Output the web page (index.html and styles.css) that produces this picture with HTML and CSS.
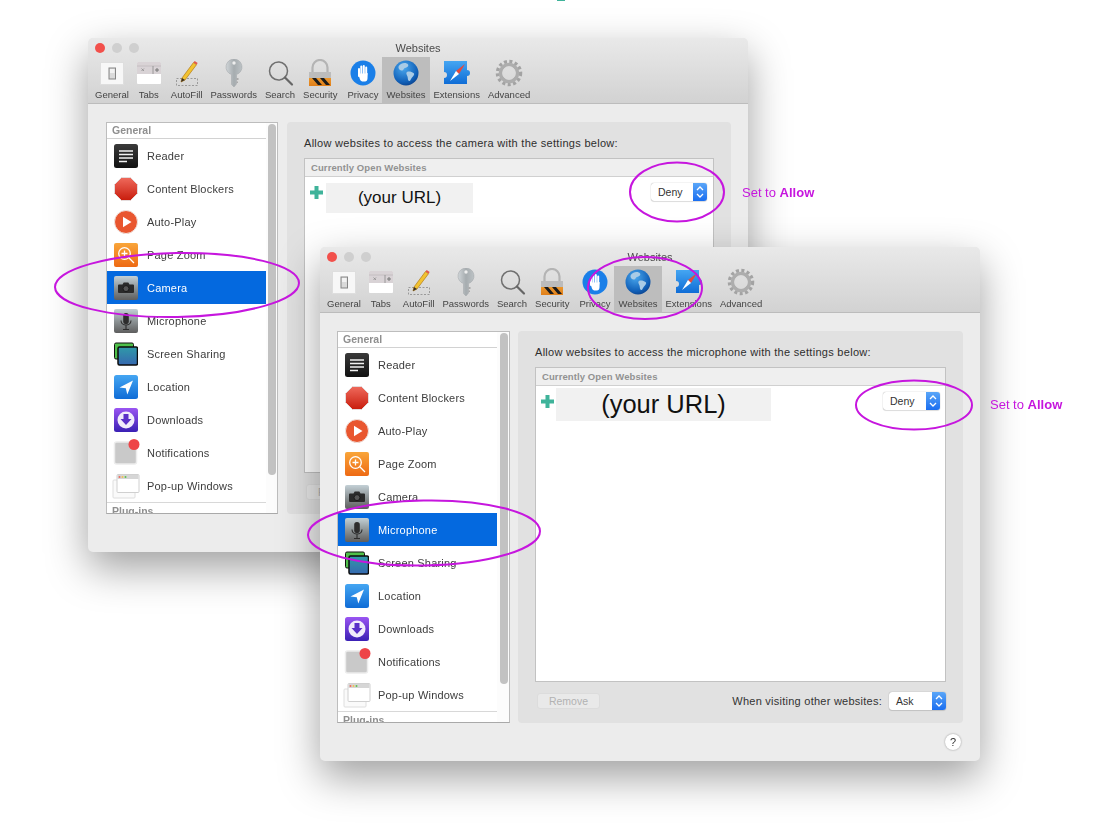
FILE: index.html
```html
<!DOCTYPE html>
<html lang="en">
<head>
    <meta charset="UTF-8">
    <meta name="viewport" content="width=device-width, initial-scale=1.0">
    <title>Websites preferences</title>
    <link rel="stylesheet" href="styles.css">
</head>
<body>

<svg class="sprites" width="0" height="0" aria-hidden="true">
    <defs>
        <linearGradient id="g-dark" x1="0" y1="0" x2="0" y2="1"><stop offset="0" stop-color="#3a3a3a"/><stop offset="1" stop-color="#111"/></linearGradient>
        <linearGradient id="g-red" x1="0" y1="0" x2="0" y2="1"><stop offset="0" stop-color="#ef6a5c"/><stop offset="1" stop-color="#c81c0c"/></linearGradient>
        <linearGradient id="g-orange" x1="0" y1="0" x2="0" y2="1"><stop offset="0" stop-color="#f9a63a"/><stop offset="1" stop-color="#ee6a14"/></linearGradient>
        <linearGradient id="g-steel" x1="0" y1="0" x2="0" y2="1"><stop offset="0" stop-color="#c3d0d6"/><stop offset=".5" stop-color="#8d9496"/><stop offset="1" stop-color="#5e5e5e"/></linearGradient>
        <linearGradient id="g-blue" x1="0" y1="0" x2="0" y2="1"><stop offset="0" stop-color="#45a6f2"/><stop offset="1" stop-color="#0f6cd6"/></linearGradient>
        <linearGradient id="g-purple" x1="0" y1="0" x2="0" y2="1"><stop offset="0" stop-color="#9a55f2"/><stop offset="1" stop-color="#3a20b4"/></linearGradient>
        <linearGradient id="g-screen" x1="0" y1="0" x2="0" y2="1"><stop offset="0" stop-color="#2f9aa8"/><stop offset="1" stop-color="#3668b0"/></linearGradient>
        <linearGradient id="g-gold" x1="0" y1="0" x2="0" y2="1"><stop offset="0" stop-color="#f5a93a"/><stop offset="1" stop-color="#e07f1a"/></linearGradient>
        <linearGradient id="g-key" x1="0" y1="0" x2="1" y2="0"><stop offset="0" stop-color="#d0d5d8"/><stop offset=".5" stop-color="#a6acaf"/><stop offset="1" stop-color="#bcc2c5"/></linearGradient>
        <radialGradient id="g-globe" cx=".4" cy=".3" r=".8"><stop offset="0" stop-color="#4aa8ee"/><stop offset=".7" stop-color="#1160b8"/><stop offset="1" stop-color="#0a3a80"/></radialGradient>

        <symbol id="i-reader" viewBox="0 0 24 24">
            <rect width="24" height="24" rx="2.5" fill="url(#g-dark)"/>
            <path d="M5 7h14M5 10.5h14M5 14h14M5 17.5h8" stroke="#f2f2f2" stroke-width="1.3"/>
        </symbol>
        <symbol id="i-blockers" viewBox="0 0 24 24">
            <path d="M7.5.5h9l7 7v9l-7 7h-9l-7-7v-9z" fill="url(#g-red)" stroke="#e4dcdc"/>
        </symbol>
        <symbol id="i-autoplay" viewBox="0 0 24 24">
            <circle cx="12" cy="12" r="11.5" fill="#e9562f" stroke="#efe4e0"/>
            <path d="M9 6.8l8.5 5.2L9 17.2z" fill="#fff"/>
        </symbol>
        <symbol id="i-zoom" viewBox="0 0 24 24">
            <rect width="24" height="24" rx="2" fill="url(#g-orange)"/>
            <circle cx="10.5" cy="10.5" r="5.8" fill="none" stroke="#fff" stroke-width="1.3"/>
            <path d="M14.8 14.8l5.2 5.2M10.5 7.5v6M7.5 10.5h6" stroke="#fff" stroke-width="1.3"/>
        </symbol>
        <symbol id="i-camera" viewBox="0 0 24 24">
            <rect width="24" height="24" rx="2" fill="url(#g-steel)"/>
            <path d="M5 8.5h3.5l1.2-2h4.6l1.2 2H19a1 1 0 0 1 1 1V16a1 1 0 0 1-1 1H5a1 1 0 0 1-1-1V9.500a1 1 0 0 1 1-1z" fill="#2a2a2a"/>
            <circle cx="12" cy="12.6" r="3" fill="#555" stroke="#1b1b1b"/>
        </symbol>
        <symbol id="i-mic" viewBox="0 0 24 24">
            <rect width="24" height="24" rx="2" fill="url(#g-steel)"/>
            <rect x="9.2" y="4" width="5.6" height="11" rx="2.8" fill="#2d2d2d"/>
            <path d="M7 11.500c0 6 10 6 10 0M12 16v4M9 20.500h6" fill="none" stroke="#2d2d2d" stroke-width="1.1"/>
        </symbol>
        <symbol id="i-screen" viewBox="0 0 24 24">
            <rect x=".5" y="1" width="19" height="16" rx="1.5" fill="#4fc04a" stroke="#111"/>
            <rect x="4" y="5" width="19.5" height="18" rx="1.5" fill="url(#g-screen)" stroke="#0c0c0c" stroke-width="1.5"/>
        </symbol>
        <symbol id="i-location" viewBox="0 0 24 24">
            <rect width="24" height="24" rx="2.5" fill="url(#g-blue)"/>
            <path d="M19 5.500L5.500 12.500l6.300.7 1.500 6.300z" fill="#fff"/>
        </symbol>
        <symbol id="i-downloads" viewBox="0 0 24 24">
            <rect width="24" height="24" rx="2.5" fill="url(#g-purple)"/>
            <circle cx="12" cy="12" r="8.5" fill="#f1ecfb"/>
            <path d="M9.500 6h5v5h3L12 17 6.500 11h3z" fill="#5a30c8"/>
        </symbol>
        <symbol id="i-notify" viewBox="0 0 24 24" overflow="visible">
            <rect x=".5" y="1" width="22" height="22" rx="2" fill="#c9c9c9" stroke="#ececec" stroke-width="1.5"/>
            <circle cx="20" cy="3.500" r="5.500" fill="#ee4548"/>
        </symbol>
        <symbol id="i-popup" viewBox="0 0 24 24" overflow="visible">
            <rect x="-1" y="6" width="22" height="18" rx="1" fill="#fafafa" stroke="#dedede"/>
            <rect x="3" y=".5" width="22" height="18" rx="1" fill="#fff" stroke="#d0d0d0"/>
            <rect x="3.500" y="1" width="21" height="4" fill="#d6d6d6"/>
            <circle cx="5.500" cy="3" r="1" fill="#ef6b5e"/><circle cx="8.500" cy="3" r="1" fill="#f0c050"/><circle cx="11.500" cy="3" r="1" fill="#60c050"/>
        </symbol>

        <symbol id="t-general" viewBox="0 0 28 28">
            <rect x="2.500" y="3.500" width="23" height="22" fill="#f7f7f7" stroke="#dedede"/>
            <rect x="11" y="9" width="6.500" height="11" fill="#dadada" stroke="#858585"/>
            <rect x="12" y="10" width="4.500" height="4" fill="#f2f2f2"/>
        </symbol>
        <symbol id="t-tabs" viewBox="0 0 28 28">
            <rect x="2" y="3" width="24" height="22" rx="1" fill="#fff"/>
            <path d="M3 3h22a1 1 0 0 1 1 1v11H2V4a1 1 0 0 1 1-1z" fill="#d9d3d6"/>
            <path d="M2 7h24" stroke="#c4bec1"/>
            <path d="M6.500 9.500l2.500 2.500M9 9.500L6.500 12M18 7v8" stroke="#8c8c8c" stroke-width=".8"/>
            <path d="M22 9v4M20 11h4" stroke="#777"/>
        </symbol>
        <symbol id="t-autofill" viewBox="0 0 28 28">
            <rect x="3.500" y="19.500" width="21" height="7" fill="none" stroke="#9a9a9a" stroke-dasharray="2 1.500"/>
            <path d="M8 23l1-4L20.500 3.500l3 2.200L12 21z" fill="#f2c230" stroke="#b07a18" stroke-width=".7"/>
            <path d="M20.500 3.500l1.200-1.600 3 2.200-1.200 1.600z" fill="#e2584a"/>
            <path d="M8 23l1-4 3 2z" fill="#3a3028"/>
        </symbol>
        <symbol id="t-passwords" viewBox="0 0 28 28">
            <path d="M14 0a8 8 0 0 1 2.500 15.600V25l-2.500 3-2.500-2.500V15.600A8 8 0 0 1 14 0z" fill="url(#g-key)" stroke="#a0a5a8" stroke-width=".5"/>
            <path d="M16.500 19h2v2h-2zM16.500 22.500h1.500v1.500h-1.500z" fill="#aaa"/>
            <circle cx="14" cy="4" r="1.700" fill="#eee"/>
        </symbol>
        <symbol id="t-search" viewBox="0 0 28 28">
            <circle cx="12.500" cy="12" r="9" fill="none" stroke="#6f6f6f" stroke-width="1.500"/>
            <path d="M19 18.500l7 7" stroke="#666" stroke-width="2.200" stroke-linecap="round"/>
        </symbol>
        <symbol id="t-security" viewBox="0 0 28 28">
            <path d="M6.500 14V8.500a7.500 7.500 0 0 1 15 0V14" fill="none" stroke="#b4b4b4" stroke-width="2.200"/>
            <rect x="3" y="13" width="22" height="14" fill="url(#g-gold)"/>
            <rect x="3" y="13" width="22" height="6" fill="#bcbcbc"/>
            <path d="M6 19l6 7h4l-6-7zM14 19l6 7h4l-6-7z" fill="#1c1c1c"/>
        </symbol>
        <symbol id="t-privacy" viewBox="0 0 28 28">
            <circle cx="14" cy="14" r="12.500" fill="#1a7fe8"/>
            <path d="M10 10v7M12.300 7.500V15M14.800 7v8M17.200 8.500V16" stroke="#fff" stroke-width="2" stroke-linecap="round"/>
            <path d="M9 14.500l2 6c.7 1.500 1.700 2 3 2h2c1.500 0 2.400-1.200 2.500-3l.2-5.500-2 .5H10z" fill="#fff"/>
        </symbol>
        <symbol id="t-websites" viewBox="0 0 28 28">
            <circle cx="14" cy="14" r="12.500" fill="url(#g-globe)"/>
            <path d="M9 5c3-1.500 6-1 7 .5s-1 3-3 3.500-1 3-3.500 2.500S4.500 7.500 9 5zM15 13c2-1 5 0 6.500 1s0 3-1.500 4.500-1.500 4-3 3.500-1-3-1.500-4.500-2-3.500-.5-4.500z" fill="#a9cbe6"/>
        </symbol>
        <symbol id="t-extensions" viewBox="0 0 28 28">
            <path d="M1 2h23v9a3 3 0 0 1 0 6v8H1v-6a3 3 0 0 0 0-6z" fill="url(#g-blue)"/>
            <path d="M22 5l-9 7 3 3z" fill="#e64a3c"/>
            <path d="M7 22l6-10 3 3z" fill="#fff"/>
        </symbol>
        <symbol id="t-advanced" viewBox="0 0 28 28">
            <circle cx="14" cy="14" r="11.500" fill="none" stroke="#a3a3a3" stroke-width="3.500" stroke-dasharray="3 2.420"/>
            <circle cx="14" cy="14" r="8.500" fill="none" stroke="#adadad" stroke-width="3.600"/>
            <circle cx="14" cy="14" r="6.300" fill="none" stroke="#dcdcdc" stroke-width=".8"/>
        </symbol>
    </defs>
</svg>

<div class="top-mark"></div>

<!-- camera window -->
<section class="window window-camera">
    <header class="chrome">
        <div class="title-row">
            <div class="lights"><i class="light light-red"></i><i class="light"></i><i class="light"></i></div>
            <div class="win-title">Websites</div>
        </div>
        <nav class="toolbar">
            <a class="tool"><svg><use href="#t-general"/></svg><span>General</span></a>
            <a class="tool tool-tabs"><svg><use href="#t-tabs"/></svg><span>Tabs</span></a>
            <a class="tool"><svg><use href="#t-autofill"/></svg><span>AutoFill</span></a>
            <a class="tool"><svg><use href="#t-passwords"/></svg><span>Passwords</span></a>
            <a class="tool"><svg><use href="#t-search"/></svg><span>Search</span></a>
            <a class="tool"><svg><use href="#t-security"/></svg><span>Security</span></a>
            <a class="tool tool-privacy"><svg><use href="#t-privacy"/></svg><span>Privacy</span></a>
            <a class="tool tool-active"><svg><use href="#t-websites"/></svg><span>Websites</span></a>
            <a class="tool"><svg><use href="#t-extensions"/></svg><span>Extensions</span></a>
            <a class="tool"><svg><use href="#t-advanced"/></svg><span>Advanced</span></a>
        </nav>
    </header>
    <div class="content">
        <aside class="sidebar">
            <div class="side-list">
                <div class="side-head">General</div>
                <div class="side-row"><svg><use href="#i-reader"/></svg>Reader</div>
                <div class="side-row"><svg><use href="#i-blockers"/></svg>Content Blockers</div>
                <div class="side-row"><svg><use href="#i-autoplay"/></svg>Auto-Play</div>
                <div class="side-row"><svg><use href="#i-zoom"/></svg>Page Zoom</div>
                <div class="side-row side-row-on"><svg><use href="#i-camera"/></svg>Camera</div>
                <div class="side-row"><svg><use href="#i-mic"/></svg>Microphone</div>
                <div class="side-row"><svg><use href="#i-screen"/></svg>Screen Sharing</div>
                <div class="side-row"><svg><use href="#i-location"/></svg>Location</div>
                <div class="side-row"><svg><use href="#i-downloads"/></svg>Downloads</div>
                <div class="side-row"><svg><use href="#i-notify"/></svg>Notifications</div>
                <div class="side-row"><svg><use href="#i-popup"/></svg>Pop-up Windows</div>
                <div class="side-head side-head-plugins">Plug-ins</div>
            </div>
            <div class="side-track"><div class="side-thumb"></div></div>
        </aside>
        <div class="panel">
            <p class="panel-text">Allow websites to access the camera with the settings below:</p>
            <div class="sites">
                <div class="sites-head">Currently Open Websites</div>
                <div class="sites-row">
                    <svg class="plus" viewBox="0 0 13 13"><path d="M4.500 0h4v4.500H13v4H8.500V13h-4V8.500H0v-4h4.500z"/></svg>
                    <div class="url">(your URL)</div>
                    <div class="select select-deny"><span>Deny</span><b class="stepper"><svg viewBox="0 0 14 18"><path d="M4 7l3-3 3 3M4 11l3 3 3-3"/></svg></b></div>
                </div>
            </div>
            <div class="panel-foot">
                <button class="remove">Remove</button>
                <span class="foot-label">When visiting other websites:</span>
                <div class="select"><span>Ask</span><b class="stepper"><svg viewBox="0 0 14 18"><path d="M4 7l3-3 3 3M4 11l3 3 3-3"/></svg></b></div>
            </div>
        </div>
    </div>
    <div class="win-foot"><button class="help">?</button></div>
</section>

<!-- microphone window -->
<section class="window window-mic">
    <header class="chrome">
        <div class="title-row">
            <div class="lights"><i class="light light-red"></i><i class="light"></i><i class="light"></i></div>
            <div class="win-title">Websites</div>
        </div>
        <nav class="toolbar">
            <a class="tool"><svg><use href="#t-general"/></svg><span>General</span></a>
            <a class="tool tool-tabs"><svg><use href="#t-tabs"/></svg><span>Tabs</span></a>
            <a class="tool"><svg><use href="#t-autofill"/></svg><span>AutoFill</span></a>
            <a class="tool"><svg><use href="#t-passwords"/></svg><span>Passwords</span></a>
            <a class="tool"><svg><use href="#t-search"/></svg><span>Search</span></a>
            <a class="tool"><svg><use href="#t-security"/></svg><span>Security</span></a>
            <a class="tool tool-privacy"><svg><use href="#t-privacy"/></svg><span>Privacy</span></a>
            <a class="tool tool-active"><svg><use href="#t-websites"/></svg><span>Websites</span></a>
            <a class="tool"><svg><use href="#t-extensions"/></svg><span>Extensions</span></a>
            <a class="tool"><svg><use href="#t-advanced"/></svg><span>Advanced</span></a>
        </nav>
    </header>
    <div class="content">
        <aside class="sidebar">
            <div class="side-list">
                <div class="side-head">General</div>
                <div class="side-row"><svg><use href="#i-reader"/></svg>Reader</div>
                <div class="side-row"><svg><use href="#i-blockers"/></svg>Content Blockers</div>
                <div class="side-row"><svg><use href="#i-autoplay"/></svg>Auto-Play</div>
                <div class="side-row"><svg><use href="#i-zoom"/></svg>Page Zoom</div>
                <div class="side-row"><svg><use href="#i-camera"/></svg>Camera</div>
                <div class="side-row side-row-on"><svg><use href="#i-mic"/></svg>Microphone</div>
                <div class="side-row"><svg><use href="#i-screen"/></svg>Screen Sharing</div>
                <div class="side-row"><svg><use href="#i-location"/></svg>Location</div>
                <div class="side-row"><svg><use href="#i-downloads"/></svg>Downloads</div>
                <div class="side-row"><svg><use href="#i-notify"/></svg>Notifications</div>
                <div class="side-row"><svg><use href="#i-popup"/></svg>Pop-up Windows</div>
                <div class="side-head side-head-plugins">Plug-ins</div>
            </div>
            <div class="side-track"><div class="side-thumb"></div></div>
        </aside>
        <div class="panel">
            <p class="panel-text">Allow websites to access the microphone with the settings below:</p>
            <div class="sites">
                <div class="sites-head">Currently Open Websites</div>
                <div class="sites-row">
                    <svg class="plus" viewBox="0 0 13 13"><path d="M4.500 0h4v4.500H13v4H8.500V13h-4V8.500H0v-4h4.500z"/></svg>
                    <div class="url url-big">(your URL)</div>
                    <div class="select select-deny"><span>Deny</span><b class="stepper"><svg viewBox="0 0 14 18"><path d="M4 7l3-3 3 3M4 11l3 3 3-3"/></svg></b></div>
                </div>
            </div>
            <div class="panel-foot">
                <button class="remove">Remove</button>
                <span class="foot-label">When visiting other websites:</span>
                <div class="select"><span>Ask</span><b class="stepper"><svg viewBox="0 0 14 18"><path d="M4 7l3-3 3 3M4 11l3 3 3-3"/></svg></b></div>
            </div>
        </div>
    </div>
    <div class="win-foot"><button class="help">?</button></div>
</section>

<!-- hand drawn annotations over both windows -->
<svg class="marks" viewBox="0 0 1102 823">
    <ellipse cx="177" cy="285" rx="122" ry="32" transform="rotate(-1 177 285)"/>
    <ellipse cx="677" cy="192" rx="47" ry="29.500"/>
    <ellipse cx="645" cy="288" rx="57" ry="31"/>
    <ellipse cx="424" cy="533" rx="116" ry="32.500" transform="rotate(-1 424 533)"/>
    <ellipse cx="914" cy="405" rx="58" ry="24.500"/>
</svg>
<div class="note note-camera">Set to <b>Allow</b></div>
<div class="note note-mic">Set to <b>Allow</b></div>

</body>
</html>
```

FILE: styles.css
```css
body {
    margin: 0;
    height: 823px;
    overflow: hidden;
    position: relative;
    background: #fff;
    font-family: "Liberation Sans", Arial, sans-serif;
    color: #3c3c3c;
}
.sprites {
    position: absolute;
}
.top-mark {
    position: absolute;
    left: 557px;
    top: 0;
    width: 8px;
    height: 1px;
    background: #3fb39a;
}

/* windows sit on a free canvas */
.window {
    position: absolute;
    width: 660px;
    height: 514px;
    display: flex;
    flex-direction: column;
    background: #ececec;
    border-radius: 5px;
    box-shadow: 0 16px 42px rgba(0, 0, 0, 0.38);
    filter: blur(0.45px);
}
.window-camera {
    left: 88px;
    top: 38px;
}
.window-mic {
    left: 320px;
    top: 247px;
}

.chrome {
    height: 66px;
    box-sizing: border-box;
    background: linear-gradient(#e9e9e9, #d2d2d2);
    border-bottom: 1px solid #bcbcbc;
    border-radius: 5px 5px 0 0;
}
.title-row {
    height: 19px;
    display: grid;
    grid-template-columns: 1fr auto 1fr;
    align-items: center;
}
.lights {
    display: flex;
    gap: 7px;
    padding-left: 7px;
}
.light {
    width: 10px;
    height: 10px;
    border-radius: 50%;
    background: #cfcfcf;
    border: 0;
}
.light-red {
    background: #f2504b;
}
.win-title {
    font-size: 11px;
    color: #4a4a4a;
}

.toolbar {
    display: flex;
    padding-left: 3px;
}
.tool {
    display: flex;
    flex-direction: column;
    align-items: center;
    height: 47px;
    padding: 0 4px;
    box-sizing: border-box;
    font-size: 9.5px;
    color: #444;
    white-space: nowrap;
}
.tool svg {
    width: 28px;
    height: 28px;
    margin-top: 2px;
    flex: none;
}
.tool span {
    margin-top: 2px;
    line-height: 11px;
}
.tool-tabs {
    margin-left: -2px;
}
.tool-privacy {
    margin-left: 2px;
}
.tool-active {
    margin: 0 -1px;
    padding: 0 5px;
    background: #bdbdbd;
}

.content {
    display: flex;
    gap: 9px;
    padding: 18px 17px 0 18px;
}
.window-mic .content {
    gap: 8px;
    padding-left: 17px;
}

/* left list */
.sidebar {
    width: 172px;
    height: 392px;
    box-sizing: border-box;
    display: flex;
    overflow: hidden;
    background: #fff;
    border: 1px solid #bdbdbd;
    border-bottom-color: #a9a9a9;
}
.window-mic .sidebar {
    width: 173px;
}
.side-list {
    width: 159px;
    flex: none;
}
.side-head {
    height: 16px;
    box-sizing: border-box;
    padding-left: 5px;
    border-bottom: 1px solid #d2d2d2;
    font-size: 10.5px;
    font-weight: bold;
    line-height: 15px;
    color: #8f8f8f;
}
.side-head-plugins {
    border-bottom: 0;
    border-top: 1px solid #d8d8d8;
    padding-top: 1px;
}
.side-row {
    height: 33px;
    display: flex;
    align-items: center;
    gap: 9px;
    padding-left: 7px;
    font-size: 11px;
    letter-spacing: 0.2px;
    color: #3c3c3c;
}
.side-row svg {
    width: 24px;
    height: 24px;
    flex: none;
    overflow: visible;
}
.side-row-on {
    background: #0469df;
    color: #fff;
}
.side-track {
    flex: 1;
    padding: 1px 0 0 2px;
    background: #fcfcfc;
}
.window-mic .side-track {
    padding-left: 3px;
}
.side-thumb {
    width: 8px;
    height: 351px;
    border-radius: 4px;
    background: #c2c2c2;
}

/* right side */
.panel {
    width: 444px;
    height: 392px;
    box-sizing: border-box;
    padding: 14px 17px 0;
    background: #e1e1e1;
    border-radius: 4px;
}
.window-mic .panel {
    width: 445px;
}
.panel-text {
    margin: 0 0 8px;
    font-size: 11px;
    line-height: 14px;
    letter-spacing: 0.29px;
    color: #2e2e2e;
    white-space: nowrap;
}
.sites {
    height: 315px;
    width: 410px;
    box-sizing: border-box;
    background: #fff;
    border: 1px solid #c2c2c2;
}
.window-mic .sites {
    width: 411px;
}
.sites-head {
    height: 18px;
    box-sizing: border-box;
    padding-left: 6px;
    background: #efefef;
    border-bottom: 1px solid #d0d0d0;
    font-size: 9.5px;
    font-weight: bold;
    line-height: 18px;
    letter-spacing: 0.1px;
    color: #929292;
}
.sites-row {
    height: 30px;
    display: flex;
    align-items: center;
    padding: 0 6px 0 5px;
}
.window-mic .sites-row {
    padding-right: 5px;
}
.plus {
    width: 13px;
    height: 13px;
    flex: none;
    fill: #3fb39a;
}
.url {
    width: 147px;
    height: 30px;
    margin: 12px 0 0 3px;
    background: #f1f1f1;
    text-align: center;
    font-size: 17px;
    line-height: 30px;
    color: #111;
}
.url-big {
    width: 215px;
    height: 33px;
    margin: 7px 0 0 2px;
    font-size: 25.5px;
    line-height: 33px;
}
.select {
    width: 57px;
    height: 18px;
    flex: none;
    box-sizing: border-box;
    display: flex;
    justify-content: space-between;
    background: #fff;
    border-radius: 3px;
    box-shadow: 0 0 1px rgba(0, 0, 0, 0.45), 0 1px 1px rgba(0, 0, 0, 0.1);
    font-size: 10.5px;
    line-height: 18px;
    color: #333;
}
.select span {
    padding-left: 7px;
}
.select-deny {
    width: 56px;
    margin-left: auto;
}
.window-mic .select-deny {
    width: 57px;
}
.stepper {
    width: 14px;
    display: block;
    background: linear-gradient(#5aa6f8, #1a6ef0);
    border-radius: 0 3px 3px 0;
}
.stepper svg {
    display: block;
    width: 14px;
    height: 18px;
    fill: none;
    stroke: #fff;
    stroke-width: 1.3;
}
.panel-foot {
    display: flex;
    align-items: center;
    height: 18px;
    margin-top: 10px;
    padding-left: 2px;
    width: 411px;
    box-sizing: border-box;
}
.remove {
    width: 63px;
    height: 16px;
    padding: 0;
    margin-right: auto;
    background: #e9e9e9;
    border: 1px solid #dcdcdc;
    border-radius: 3px;
    font: 10.5px "Liberation Sans", Arial, sans-serif;
    color: #b2b2b2;
}
.foot-label {
    margin-right: 7px;
    font-size: 11px;
    letter-spacing: 0.25px;
    color: #333;
}
.win-foot {
    display: flex;
    justify-content: flex-end;
    padding: 11px 19px 0 0;
}
.help {
    width: 16px;
    height: 16px;
    padding: 0;
    background: #fff;
    border: 0;
    border-radius: 50%;
    box-shadow: 0 0 2px rgba(0, 0, 0, 0.4);
    font: 11px "Liberation Sans", Arial, sans-serif;
    color: #333;
}

/* annotations */
.marks {
    position: absolute;
    left: 0;
    top: 0;
    width: 1102px;
    height: 823px;
    fill: none;
    stroke: #c616de;
    stroke-width: 2;
}
.note {
    position: absolute;
    font-size: 13px;
    line-height: 16px;
    color: #c616de;
    white-space: nowrap;
}
.note-camera {
    left: 742px;
    top: 185px;
}
.note-mic {
    left: 990px;
    top: 397px;
}
```
